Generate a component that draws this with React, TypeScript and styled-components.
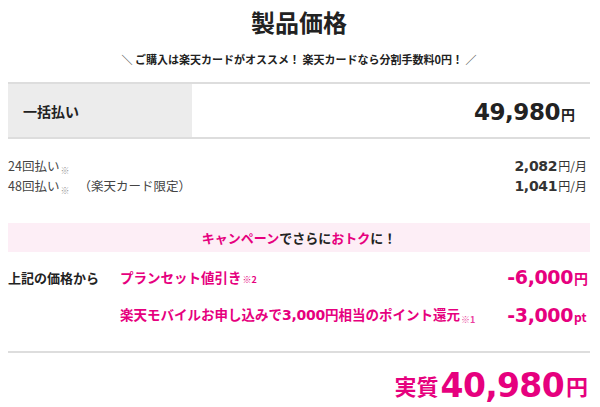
import styled, { createGlobalStyle } from "styled-components";

const GlobalStyle = createGlobalStyle`
  body {
    margin: 0;
    background: #ffffff;
    color: #222222;
    font-family: "Noto Sans CJK JP", "Noto Sans", sans-serif;
  }
`

const PINK = "#e6007e"

interface Installment {
  label: string
  note?: string
  amount: string
}

const installments: Installment[] = [
  { label: "24回払い", amount: "2,082" },
  { label: "48回払い", note: "（楽天カード限定）", amount: "1,041" },
]

const App = () => {
  return (
    <>
      <GlobalStyle />
      <Page>
        <Title>製品価格</Title>
        <Lead>＼ ご購入は楽天カードがオススメ！ 楽天カードなら分割手数料0円！ ／</Lead>

        <LumpRow>
          <LumpLabel>一括払い</LumpLabel>
          <LumpPrice>
            <Num size={23}>49,980</Num>
            <Unit size={14}>円</Unit>
          </LumpPrice>
        </LumpRow>

        <InstallmentList>
          {installments.map((item) => (
            <InstallmentRow key={item.label}>
              <InstallmentLabel>
                {item.label}
                <Kome>※</Kome>
                {item.note && <Note>{item.note}</Note>}
              </InstallmentLabel>
              <span>
                <Num size={14}>{item.amount}</Num>
                <MonthUnit>円/月</MonthUnit>
              </span>
            </InstallmentRow>
          ))}
        </InstallmentList>

        <CampaignBand>
          <Pink>キャンペーン</Pink>でさらに<Pink>おトク</Pink>に！
        </CampaignBand>

        <DiscountGrid>
          <DiscountLead>上記の価格から</DiscountLead>
          <DiscountName>
            プランセット値引き<SmallNote>※2</SmallNote>
          </DiscountName>
          <DiscountAmount>
            <Num size={19}>-6,000</Num>
            <Unit size={14}>円</Unit>
          </DiscountAmount>

          <span />
          <DiscountName>
            楽天モバイルお申し込みで<Num size={14}>3,000</Num>円相当のポイント還元
            <SmallNote low>※1</SmallNote>
          </DiscountName>
          <DiscountAmount>
            <Num size={19}>-3,000</Num>
            <Unit size={12}>pt</Unit>
          </DiscountAmount>
        </DiscountGrid>

        <Total>
          <TotalLabel>実質</TotalLabel>
          <Num size={33}>40,980</Num>
          <TotalYen>円</TotalYen>
        </Total>
      </Page>
    </>
  )
}

const Page = styled.div`
  width: 582px;
  padding: 0 10px 0 8px;
`

const Title = styled.h1`
  margin: 0;
  height: 44px;
  line-height: 44px;
  text-align: center;
  font-size: 24px;
  font-weight: 700;
  color: #222222;
`

const Lead = styled.p`
  margin: 0 0 8px;
  height: 30px;
  line-height: 30px;
  text-align: center;
  font-size: 11px;
  font-weight: 700;
  color: #222222;
  white-space: nowrap;
`

const LumpRow = styled.div`
  display: flex;
  align-items: stretch;
  height: 53px;
  border-top: 2px solid #dddddd;
  border-bottom: 2px solid #dddddd;
`

const LumpLabel = styled.div`
  width: 184px;
  display: flex;
  align-items: center;
  padding-left: 15px;
  box-sizing: border-box;
  background: #ececec;
  font-size: 14px;
  font-weight: 700;
`

const LumpPrice = styled.div`
  flex: 1;
  display: flex;
  align-items: baseline;
  justify-content: flex-end;
  padding: 15px 15px 0 0;
  color: #222222;
`

const Num = styled.span<{ size: number }>`
  font-family: "DejaVu Sans", "Liberation Sans", sans-serif;
  font-weight: 700;
  font-size: ${(props) => props.size}px;
  letter-spacing: -0.02em;
`

const Unit = styled.span<{ size: number }>`
  font-size: ${(props) => props.size}px;
  font-weight: 700;
  margin-left: 1px;
`

const InstallmentList = styled.ul`
  list-style: none;
  margin: 0;
  padding: 15px 3px 0 0;
`

const InstallmentRow = styled.li`
  display: flex;
  justify-content: space-between;
  align-items: baseline;
  height: 20px;
  line-height: 20px;
  color: #333333;
`

const InstallmentLabel = styled.span`
  font-size: 12.5px;
  color: #444444;
`

const Kome = styled.span`
  font-size: 9px;
  color: #999999;
  vertical-align: -3px;
  margin-left: 1px;
`

const Note = styled.span`
  margin-left: 9px;
`

const MonthUnit = styled.span`
  font-size: 12px;
  color: #333333;
  margin-left: 1px;
`

const CampaignBand = styled.div`
  margin-top: 29px;
  height: 29px;
  line-height: 29px;
  background: #fdeef6;
  text-align: center;
  font-size: 13px;
  font-weight: 700;
  color: #222222;
`

const Pink = styled.span`
  color: ${PINK};
`

const DiscountGrid = styled.div`
  display: grid;
  grid-template-columns: 112px 1fr auto;
  grid-auto-rows: 38px;
  align-items: center;
  margin-top: 6px;
  padding-right: 2px;
`

const DiscountLead = styled.span`
  font-size: 13px;
  font-weight: 700;
  color: #222222;
`

const DiscountName = styled.span`
  font-size: 13.5px;
  font-weight: 700;
  color: ${PINK};
  white-space: nowrap;
`

const SmallNote = styled.span<{ low?: boolean }>`
  font-size: 9px;
  margin-left: 1px;
  opacity: ${(props) => (props.low ? 0.75 : 1)};
  vertical-align: ${(props) => (props.low ? "-3px" : "baseline")};
`

const DiscountAmount = styled.span`
  color: ${PINK};
  white-space: nowrap;
`

const Total = styled.div`
  margin-top: 17px;
  border-top: 2px solid #dddddd;
  height: 64px;
  display: flex;
  justify-content: flex-end;
  align-items: center;
  color: ${PINK};
  padding-right: 2px;
`

const TotalLabel = styled.span`
  font-size: 22px;
  font-weight: 700;
  margin-right: 2px;
`

const TotalYen = styled.span`
  font-size: 22px;
  font-weight: 700;
  margin-left: 2px;
`

export default App;
